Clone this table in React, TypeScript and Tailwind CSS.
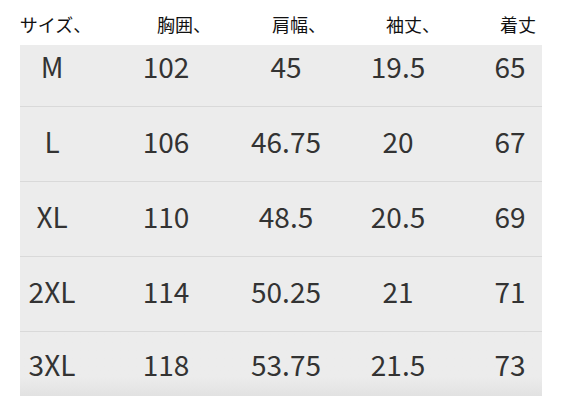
import React from "react";

const rows = [
  ["M", "102", "45", "19.5", "65"],
  ["L", "106", "46.75", "20", "67"],
  ["XL", "110", "48.5", "20.5", "69"],
  ["2XL", "114", "50.25", "21", "71"],
  ["3XL", "118", "53.75", "21.5", "73"],
];

const headers = ["サイズ、", "胸囲、", "肩幅、", "袖丈、", "着丈"];

export default function App() {
  return (
    <div
      className="w-[567px] h-[415px] bg-white overflow-hidden"
      style={{ fontFamily: '"Noto Sans CJK JP", "Noto Sans", sans-serif' }}
    >
      <div className="grid grid-cols-[111px_146px_84px_144px_66px] h-[45px] items-center pt-[2px] text-[18px] text-[#111] leading-none">
        {headers.map((h) => (
          <div key={h} className="text-center whitespace-nowrap">
            {h}
          </div>
        ))}
      </div>
      <div className="ml-[20px] w-[522px] bg-[#ececec] text-[28px] text-[#333] leading-none">
        {rows.map((r, i) => (
          <div
            key={r[0]}
            className={
              "grid grid-cols-[64px_164px_76px_148px_70px] items-center " +
              (i === 0
                ? "h-[61px] pb-[20px]"
                : i === rows.length - 1
                ? "h-[65px] pb-[1px] border-t border-[#d9d9d9] bg-gradient-to-b from-[#ececec] from-70% to-[#e2e2e2]"
                : "h-[75px] pb-[7px] border-t border-[#d9d9d9]")
            }
          >
            {r.map((c, j) => (
              <div key={j} className={"text-center " + (j === 4 ? "pl-[6px]" : "")}>
                {c}
              </div>
            ))}
          </div>
        ))}
      </div>
    </div>
  );
}
